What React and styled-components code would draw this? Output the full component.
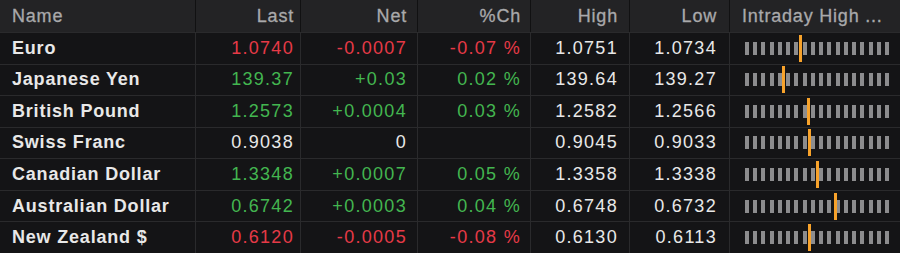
import React from "react";
import styled, { createGlobalStyle } from "styled-components";

const GlobalStyle = createGlobalStyle`
  html, body {
    margin: 0;
    padding: 0;
    background: #141416;
  }
`;

const COLS = "196px 105px 117px 113px 99px 100px 170px";

const Table = styled.div`
  width: 900px;
  height: 253px;
  display: grid;
  grid-template-rows: 32px repeat(7, 1fr);
  background: #2a2a2c;
  gap: 1px 0;
  font-family: "Liberation Sans", Arial, sans-serif;
  overflow: hidden;
`;

const Row = styled.div`
  display: grid;
  grid-template-columns: ${COLS};
  background: #2a2a2c;
`;

const Cell = styled.div`
  display: flex;
  align-items: center;
  justify-content: ${(p) => (p.$left ? "flex-start" : "flex-end")};
  padding: ${(p) => (p.$left ? "0 0 0 12px" : `0 ${p.$pr || 10}px 0 0`)};
  background: ${(p) => (p.$head ? "#232325" : "#141416")};
  border-right: 1px solid ${(p) => (p.$head ? "#111112" : "#2a2a2c")};
  font-size: 18px;
  letter-spacing: ${(p) => (p.$name ? "0.8px" : "1.3px")};
  font-weight: ${(p) => (p.$name ? 700 : 400)};
  color: ${(p) =>
    p.$head
      ? "#a9a9ab"
      : p.$tone === "up"
      ? "#43b650"
      : p.$tone === "down"
      ? "#e63a47"
      : "#e8e8e8"};
  white-space: nowrap;
  overflow: hidden;
  &:last-child {
    border-right: none;
  }
`;

const HeadLabel = styled.span`
  letter-spacing: 0.8px;
  -webkit-text-stroke: 0.3px #a9a9ab;
`;

const RangeCell = styled.div`
  display: flex;
  align-items: center;
  padding-left: 15px;
  background: #141416;
`;

const Ticks = styled.div`
  position: relative;
  width: 144px;
  height: 13px;
  display: flex;
  justify-content: space-between;
`;

const Tick = styled.span`
  width: 4px;
  height: 13px;
  background: #8c8c8e;
`;

const Marker = styled.span`
  position: absolute;
  top: -7px;
  width: 3px;
  height: 27px;
  background: #f7a22b;
`;

const rows = [
  { name: "Euro", last: "1.0740", net: "-0.0007", pct: "-0.07 %", high: "1.0751", low: "1.0734", tone: "down", mark: 53.5 },
  { name: "Japanese Yen", last: "139.37", net: "+0.03", pct: "0.02 %", high: "139.64", low: "139.27", tone: "up", mark: 36.5 },
  { name: "British Pound", last: "1.2573", net: "+0.0004", pct: "0.03 %", high: "1.2582", low: "1.2566", tone: "up", mark: 61.5 },
  { name: "Swiss Franc", last: "0.9038", net: "0", pct: "", high: "0.9045", low: "0.9033", tone: "flat", mark: 62.5 },
  { name: "Canadian Dollar", last: "1.3348", net: "+0.0007", pct: "0.05 %", high: "1.3358", low: "1.3338", tone: "up", mark: 70.5 },
  { name: "Australian Dollar", last: "0.6742", net: "+0.0003", pct: "0.04 %", high: "0.6748", low: "0.6732", tone: "up", mark: 88.5 },
  { name: "New Zealand $", last: "0.6120", net: "-0.0005", pct: "-0.08 %", high: "0.6130", low: "0.6113", tone: "down", mark: 62.5 },
];

const Range = ({ mark }) => (
  <RangeCell>
    <Ticks>
      {Array.from({ length: 18 }).map((_, i) => (
        <Tick key={i} />
      ))}
      <Marker style={{ left: mark }} />
    </Ticks>
  </RangeCell>
);

const App = () => (
  <>
    <GlobalStyle />
    <Table>
      <Row>
        <Cell $head $left><HeadLabel>Name</HeadLabel></Cell>
        <Cell $head $pr={6}><HeadLabel>Last</HeadLabel></Cell>
        <Cell $head><HeadLabel>Net</HeadLabel></Cell>
        <Cell $head $pr={9}><HeadLabel>%Ch</HeadLabel></Cell>
        <Cell $head $pr={11}><HeadLabel>High</HeadLabel></Cell>
        <Cell $head $pr={12}><HeadLabel>Low</HeadLabel></Cell>
        <Cell $head $left><HeadLabel>Intraday High ...</HeadLabel></Cell>
      </Row>
      {rows.map((r) => (
        <Row key={r.name}>
          <Cell $left $name>{r.name}</Cell>
          <Cell $pr={6} $tone={r.tone}>{r.last}</Cell>
          <Cell $tone={r.tone}>{r.net}</Cell>
          <Cell $pr={9} $tone={r.tone}>{r.pct}</Cell>
          <Cell $pr={11}>{r.high}</Cell>
          <Cell $pr={12}>{r.low}</Cell>
          <Range mark={r.mark} />
        </Row>
      ))}
    </Table>
  </>
);

export default App;
